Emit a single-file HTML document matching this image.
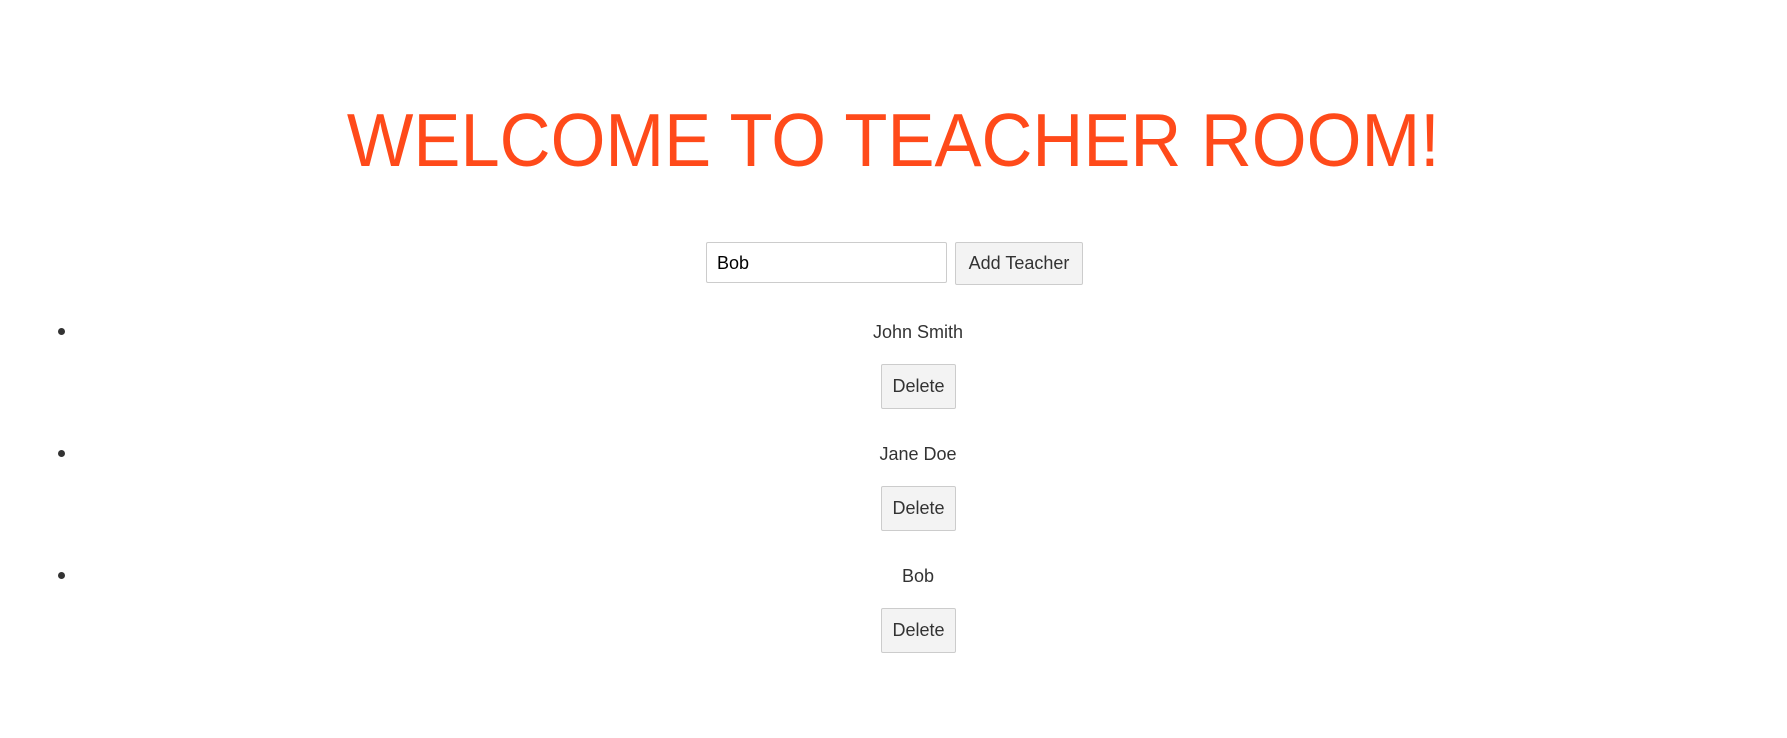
<!DOCTYPE html>
<html><head><meta charset="utf-8"><style>
html,body{margin:0;padding:0;background:#fff;width:1787px;height:738px;overflow:hidden;font-family:"Liberation Sans",sans-serif;color:#333;}
.t{position:absolute;left:0;width:1787px;top:102px;text-align:center;font-size:75px;line-height:76px;color:#ff4a1a;white-space:nowrap;}
.t span{display:inline-block;transform:scaleX(0.94);transform-origin:center;}
.inp{position:absolute;left:706px;top:242px;width:241px;height:41px;border:1px solid #ccc;border-radius:2px;font-size:18px;line-height:41px;box-sizing:border-box;padding-left:10px;color:#000;}
.btn{position:absolute;background:#f3f3f3;border:1px solid #ccc;border-radius:2px;box-sizing:border-box;font-size:18px;text-align:center;color:#333;}
.name{position:absolute;left:0;width:1836px;text-align:center;font-size:18px;line-height:22px;}
.dot{position:absolute;left:58px;width:7px;height:7px;border-radius:50%;background:#333;}
</style></head><body>
<div class="t"><span>WELCOME TO TEACHER ROOM!</span></div>
<div class="inp">Bob</div>
<div class="btn" style="left:955px;top:242px;width:128px;height:43px;line-height:41px">Add Teacher</div>

<div class="dot" style="top:328px"></div>
<div class="name" style="top:321px">John Smith</div>
<div class="btn" style="left:881px;top:364px;width:75px;height:45px;line-height:43px">Delete</div>

<div class="dot" style="top:450px"></div>
<div class="name" style="top:443px">Jane Doe</div>
<div class="btn" style="left:881px;top:486px;width:75px;height:45px;line-height:43px">Delete</div>

<div class="dot" style="top:572px"></div>
<div class="name" style="top:565px">Bob</div>
<div class="btn" style="left:881px;top:608px;width:75px;height:45px;line-height:43px">Delete</div>
</body></html>
